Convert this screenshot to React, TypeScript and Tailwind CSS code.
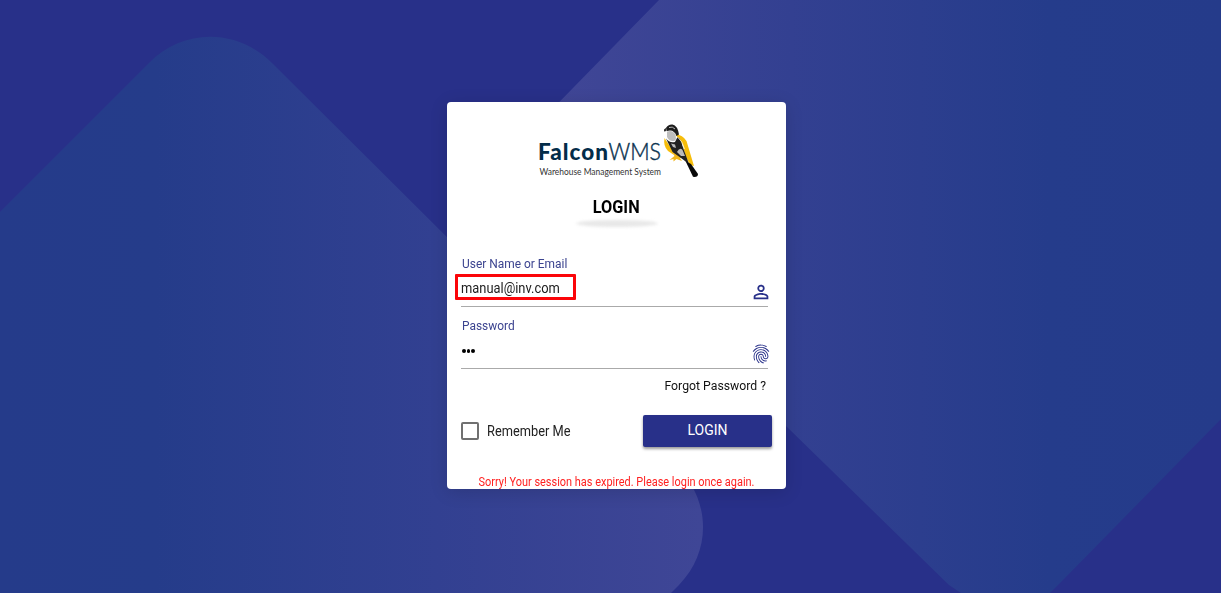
import { MdPersonOutline } from "react-icons/md";
import { IoFingerPrintOutline } from "react-icons/io5";

function Backdrop() {
  return (
    <svg className="absolute inset-0 h-full w-full" viewBox="0 0 1221 593" preserveAspectRatio="none" aria-hidden="true">
      <defs>
        <linearGradient id="left" gradientUnits="userSpaceOnUse" x1="0" y1="0" x2="703" y2="0">
          <stop offset="0" stopColor="#253b8a" />
          <stop offset="0.22" stopColor="#253c8a" />
          <stop offset="0.62" stopColor="#324091" />
          <stop offset="1" stopColor="#3f4696" />
        </linearGradient>
        <linearGradient id="right" gradientUnits="userSpaceOnUse" x1="560" y1="0" x2="1221" y2="0">
          <stop offset="0" stopColor="#404696" />
          <stop offset="0.35" stopColor="#334091" />
          <stop offset="0.74" stopColor="#253c8b" />
          <stop offset="1" stopColor="#253b8a" />
        </linearGradient>
      </defs>
      <path d="M0 212 L149 63 C183 28 237 28 272 63 L676 465 C711 500 712 551 679 585 L671 593 H0 Z" fill="url(#left)" />
      <path d="M659 0 L490 173 V250 L610 250 L786 426 L949 585 L961 593 H1050 L1060 583 L1221 419 V0 Z" fill="url(#right)" />
    </svg>
  );
}

function Logo() {
  return (
    <svg className="block" width="180" height="70" viewBox="0 0 180 70">
      <text x="13" y="44.5" fontSize="22.5" fontWeight="900" textLength="70" lengthAdjust="spacing" fill="#032c49" className="font-[Lato,sans-serif]">Falcon</text>
      <text x="83.5" y="44.5" fontSize="24" fontWeight="300" stroke="#0b3350" strokeWidth="0.45" textLength="52.5" lengthAdjust="spacingAndGlyphs" fill="#0b3350" className="font-[Lato,sans-serif]">WMS</text>
      <text x="14.5" y="60" fontSize="9.8" textLength="121.5" lengthAdjust="spacingAndGlyphs" fill="#333" className="font-[Lato,sans-serif]">Warehouse Management System</text>
      <path d="M150.5 19.5 Q157 19 161.5 26 L169 51 L165 50 L160 40 L158 30Z" fill="#f6bd0b" />
      <path d="M139.5 23 Q138 31 143 36 L149 40 L146 33Z" fill="#f6bd0b" />
      <path d="M147 36.5 L149.5 41 L144.5 45 L148.5 44 L148.5 46.5 L151.5 44 L157 46 L155 43 L158 43 L153 37Z" fill="#f0b61c" />
      <path d="M141 13 Q143 9.2 147.5 9.5 Q152.5 10.5 154 19.5 L151.5 21 Q149.5 15.5 145 15.5 L142 16Z" fill="#1c1c1c" />
      <path d="M142 16.5 Q148 14.5 150.5 20 Q152 25 149 26 Q144 26.5 142 22Z" fill="#bdbdbd" />
      <path d="M139 14.5 L141.5 12.5 L141.5 16 L139 16.5Z" fill="#333" />
      <path d="M144 12.5 Q147.5 11 150 14" stroke="#ccc" strokeWidth="0.9" fill="none" />
      <path d="M141 23.5 Q144 28 150 27 L152.5 22 Q156 24 157.5 31 L160 38 L164 49 L156 43 L147.5 37Z" fill="#222" />
      <path d="M152 37 Q155 31.5 157.5 35 L160 41 L156 41Z M146 28.5 L150 29.5 L151 33 L148 32Z" fill="#bcbcbc" />
      <path d="M152.5 22 Q157.5 26 159.5 34" stroke="#fff" strokeWidth="0.7" fill="none" />
      <path d="M160.5 46 L166 49 L173 59 Q173 62.5 168 61.8Z" fill="#080808" />
    </svg>
  );
}

export default function App() {
  return (
    <main className="relative h-[593px] w-full overflow-hidden bg-[#283089] pl-[447px] pt-[102px] font-[Roboto,sans-serif]">
      <Backdrop />
      <section className="relative flex h-[387px] w-[339px] flex-col rounded-[4px] bg-white shadow-[0_3px_18px_rgba(0,0,0,0.14)]">
        <header className="flex h-[127px] shrink-0 flex-col items-center pt-[13px]">
          <div className="-ml-[3px] h-[70px] shrink-0">
            <Logo />
          </div>
          <h1 className="mt-[9px] shrink-0 scale-x-[0.93] text-[17.5px] leading-[27px] font-bold text-black">LOGIN</h1>
          <div className="-mt-px h-[7px] w-[82px] shrink-0 rounded-[50%] bg-[#e8e8e8] blur-[1.5px]" />
        </header>
        <form className="flex shrink-0 flex-col pl-[14px]">
          <label className="ml-[1px] mt-[23px] h-[21px] origin-left scale-x-[0.955] pt-[3px] text-[12.5px] leading-[18px] text-[#3b438f]">User Name or Email</label>
          <div className="-ml-[6px] mt-[1px] flex h-[32px] w-[320px]">
            <span className="h-[26px] w-[121px] rounded-[1px] border-[3px] border-[#fb0509] pl-[3px]">
              <span className="block origin-left scale-x-[0.92] text-[14px] leading-[22px] text-[#202020]">manual@inv.com</span>
            </span>
            <MdPersonOutline size={22} color="#283089" className="ml-[174px] mt-[7px]" />
          </div>
          <div className="h-px w-[307px] bg-[#aaa]" />
          <label className="ml-[1px] mt-[10px] h-[18px] origin-left scale-x-[0.955] text-[12.5px] leading-[18px] text-[#3b438f]">Password</label>
          <div className="flex h-[33px] w-[320px] justify-between">
            <div className="flex gap-[1px] pt-[14px] pl-px">
              <i className="size-[3.6px] rounded-full bg-black" />
              <i className="size-[3.6px] rounded-full bg-black" />
              <i className="size-[3.6px] rounded-full bg-black" />
            </div>
            <IoFingerPrintOutline size={20} color="#283089" className="mr-[10px] mt-[9px]" />
          </div>
          <div className="h-px w-[307px] bg-[#aaa]" />
          <a className="mt-[7px] w-[305px] origin-right scale-x-[0.98] text-right text-[12.5px] leading-[20px] text-[#111]">Forgot Password ?</a>
          <div className="mt-[18px] flex h-[33px] w-[311px] items-center justify-between">
            <div className="flex items-center gap-[8px]">
              <span className="size-[18px] rounded-[2px] border-2 border-[#707070]" />
              <span className="origin-left scale-x-[0.915] text-[14px] leading-[20px] text-[#222]">Remember Me</span>
            </div>
            <button type="button" className="h-[32px] w-[129px] rounded-[2px] bg-[#283089] text-[14px] text-white shadow-[0_2px_3px_rgba(0,0,0,0.4)]">LOGIN</button>
          </div>
        </form>
        <p className="mt-[26px] shrink-0 scale-x-[0.912] text-center text-[12px] leading-[18px] text-[#ff2020]">Sorry! Your session has expired. Please login once again.</p>
      </section>
    </main>
  );
}
